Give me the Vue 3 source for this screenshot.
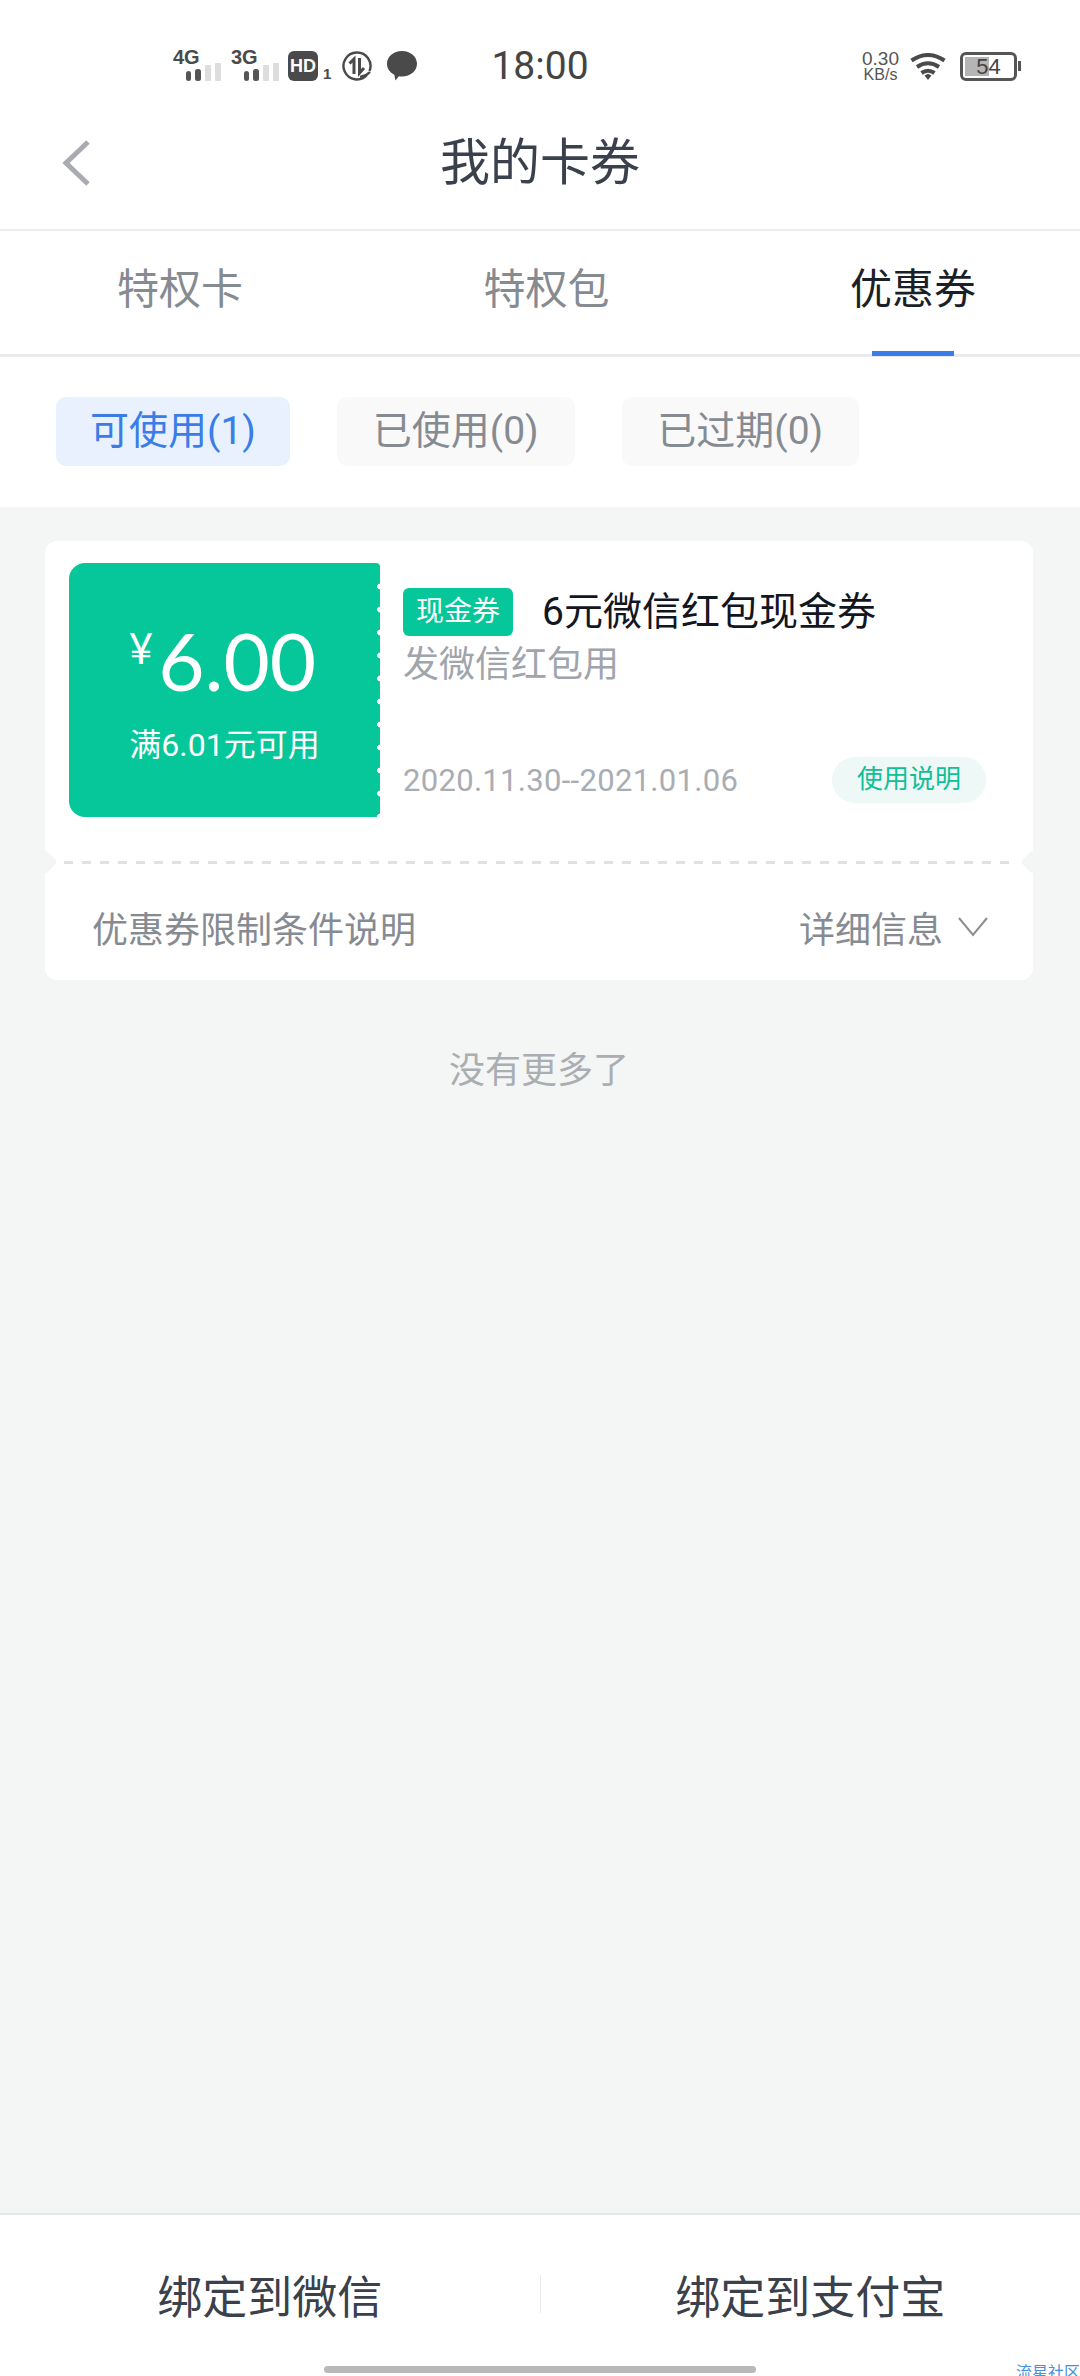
<template>
  <div class="page">
    <div class="status">
      <div class="status-left">
        <svg v-for="net in networks" :key="net" class="net" width="44" height="32" viewBox="0 0 44 32">
          <text x="0" y="14" class="net-text">{{ net }}</text>
          <rect x="13" y="21" width="5" height="10" rx="2.5" fill="#555" />
          <rect x="22" y="19" width="6" height="12" rx="2.5" fill="#555" />
          <rect x="32" y="15" width="6" height="16" rx="1" fill="#ddd" />
          <rect x="42" y="13" width="6" height="18" rx="1" fill="#ddd" />
        </svg>
        <div class="hd">HD</div>
        <span class="hd-num">1</span>
        <svg class="lte" width="30" height="30" viewBox="0 0 30 30" fill="none" stroke="#4a4a4a">
          <path d="M25 24A13.5 13.5 0 1 1 27.5 20" stroke-width="2.4" />
          <path d="M12 23V8L7.5 12.5" stroke-width="3" />
          <path d="M17.5 7V22L22 17" stroke-width="3" />
          <path d="M18 26Q24 25 28 21" stroke-width="2.4" />
        </svg>
        <svg class="bubble" width="30" height="30" viewBox="0 0 30 30">
          <path d="M15 0C23.500 0 30 5.600 30 12.800C30 20 23.500 25.500 15 25.500C13.800 25.500 12.800 25.400 11.800 25.200L8.500 29.500L7.300 23.800C2.900 21.600 0 17.500 0 12.800C0 5.600 6.500 0 15 0Z" fill="#4a4a4a" />
        </svg>
      </div>
      <div class="time">18:00</div>
      <div class="status-right">
        <div class="speed">
          <span class="speed-num">0.30</span>
          <span class="speed-unit">KB/s</span>
        </div>
        <svg class="wifi" width="36" height="27" viewBox="0 0 36 27" fill="none" stroke="#4a4a4a" stroke-width="4">
          <path d="M1.500 7.500Q18 -3.500 34.500 7.500" />
          <path d="M7 14Q18 6.500 29 14" />
          <path d="M11.500 20Q18 15.500 24.500 20" />
          <path d="M14.500 22.500L18 20.800L21.500 22.500L18 27Z" fill="#4a4a4a" stroke="none" />
        </svg>
        <div class="battery">
          <div class="battery-fill"></div>
          <span class="battery-num">54</span>
        </div>
        <div class="battery-tip"></div>
      </div>
    </div>

    <header class="nav">
      <svg class="back" width="28" height="46" viewBox="0 0 28 46" fill="none">
        <path d="M26 2L4 23L26 44" stroke="#a9abb0" stroke-width="5" />
      </svg>
      <h1>我的卡券</h1>
    </header>

    <div class="tabs">
      <div
        v-for="tab in tabs"
        :key="tab"
        class="tab"
        :class="{ active: tab === activeTab }"
      >{{ tab }}</div>
    </div>

    <div class="filters">
      <div
        v-for="(chip, i) in chips"
        :key="chip"
        class="chip"
        :class="{ on: i === 0 }"
      >{{ chip }}</div>
    </div>

    <main class="list">
      <section class="card">
        <div class="card-top">
          <div class="amount">
            <div class="price"><span class="yen">¥</span>6.00</div>
            <div class="limit">满6.01元可用</div>
          </div>
          <div class="info">
            <div class="title-row">
              <span class="badge">现金券</span>
              <span class="name">6元微信红包现金券</span>
            </div>
            <div class="desc">发微信红包用</div>
            <div class="date-row">
              <span class="date">2020.11.30--2021.01.06</span>
              <span class="howto">使用说明</span>
            </div>
          </div>
        </div>
        <div class="dash">
          <i class="notch left"></i>
          <i class="notch right"></i>
        </div>
        <div class="card-bottom">
          <span>优惠券限制条件说明</span>
          <span class="more">
            详细信息
            <svg width="30" height="22" viewBox="0 0 30 22" fill="none">
              <path d="M1 2L15 19L29 2" stroke="#8a8e94" stroke-width="2" />
            </svg>
          </span>
        </div>
      </section>
      <div class="no-more">没有更多了</div>
    </main>

    <footer class="footer">
      <div class="bind">绑定到微信</div>
      <div class="split"></div>
      <div class="bind">绑定到支付宝</div>
      <div class="home-bar"></div>
      <div class="mark">流星社区</div>
    </footer>
  </div>
</template>

<script setup>
const networks = ['4G', '3G']
const tabs = ['特权卡', '特权包', '优惠券']
const activeTab = '优惠券'
const chips = ['可使用(1)', '已使用(0)', '已过期(0)']
</script>

<style>
html,
body {
  margin: 0;
  background: #fff;
}
</style>

<style scoped>
.page {
  display: flex;
  flex-direction: column;
  height: 2376px;
  overflow: hidden;
  background: #fff;
  font-family: Roboto, "Noto Sans CJK SC", sans-serif;
}

.status {
  display: grid;
  grid-template-columns: 1fr auto 1fr;
  align-items: center;
  height: 100px;
  padding-top: 32px;
  box-sizing: border-box;
}

.status-left {
  display: flex;
  align-items: center;
  padding-left: 173px;
}

.net {
  overflow: visible;
  margin-right: 14px;
}

.net-text {
  font-size: 20px;
  font-weight: 700;
  fill: #4a4a4a;
  font-family: "Liberation Sans", sans-serif;
}

.hd {
  width: 30px;
  height: 30px;
  margin-left: -1px;
  border-radius: 6px;
  background: #4a4a4a;
  color: #fff;
  font: 700 18px/30px "Liberation Sans", sans-serif;
  text-align: center;
}

.hd-num {
  align-self: flex-end;
  width: 24px;
  padding-left: 5px;
  box-sizing: border-box;
  color: #4a4a4a;
  font: 700 15px/16px "Liberation Sans", sans-serif;
}

.bubble {
  margin-left: 15px;
}

.time {
  color: #444;
  font-size: 39px;
  line-height: 46px;
}

.status-right {
  display: flex;
  align-items: center;
  justify-content: flex-end;
  padding-right: 59px;
}

.speed {
  display: flex;
  flex-direction: column;
  align-items: center;
  margin-right: 11px;
  color: #555;
  font-family: "Liberation Sans", sans-serif;
}

.speed-num {
  font-size: 19px;
  line-height: 17px;
}

.speed-unit {
  font-size: 16px;
  line-height: 15px;
}

.wifi {
  margin-right: 14px;
}

.battery {
  position: relative;
  width: 57px;
  height: 29px;
  box-sizing: border-box;
  border: 3px solid #555;
  border-radius: 6px;
  text-align: center;
}

.battery-fill {
  position: absolute;
  top: 2px;
  bottom: 2px;
  left: 2px;
  width: 24px;
  background: #b5b5b5;
}

.battery-num {
  position: relative;
  display: block;
  color: #444;
  font: 22px/23px "Liberation Sans", sans-serif;
}

.battery-tip {
  width: 3px;
  height: 10px;
  margin-left: 1px;
  background: #555;
}

.nav {
  display: grid;
  grid-template-columns: 1fr auto 1fr;
  align-items: center;
  height: 131px;
  box-sizing: border-box;
  padding-bottom: 4px;
  border-bottom: 2px solid #ececee;
}

.back {
  margin-left: 62px;
}

.nav h1 {
  margin: 0;
  color: #3a404c;
  font-size: 50px;
  font-weight: 400;
  line-height: 64px;
}

.tabs {
  display: flex;
  justify-content: space-between;
  height: 126px;
  box-sizing: border-box;
  padding: 0 104px 0 117px;
  border-bottom: 3px solid #e9eaec;
}

.tab {
  position: relative;
  color: #868b92;
  font-size: 42px;
  line-height: 118px;
}

.tab.active {
  color: #1b1f28;
}

.tab.active::after {
  content: "";
  position: absolute;
  left: 22px;
  right: 22px;
  bottom: -2px;
  height: 5px;
  background: #3a7de8;
}

.filters {
  display: flex;
  gap: 47px;
  height: 150px;
  box-sizing: border-box;
  padding: 40px 0 0 56px;
}

.chip {
  width: 237.500px;
  height: 69px;
  border-radius: 10px;
  background: #f9f9fa;
  color: #868b92;
  font-size: 39px;
  line-height: 68px;
  text-align: center;
}

.chip.on {
  width: 234px;
  background: #e8f1fd;
  color: #3a7de8;
}

.list {
  flex: 1;
  padding: 34px 47px 0 45px;
  background: #f4f6f5;
}

.card {
  border-radius: 12px;
  background: #fff;
}

.card-top {
  display: flex;
  gap: 23px;
  height: 320px;
  box-sizing: border-box;
  padding: 22px 47px 0 24px;
}

.amount {
  position: relative;
  width: 311px;
  height: 254px;
  border-radius: 16px 4px 4px 16px;
  background: #06c799;
  color: #fff;
  text-align: center;
}

.amount::after {
  content: "";
  position: absolute;
  top: 12px;
  right: 0;
  bottom: 0;
  width: 4px;
  background-image: radial-gradient(circle at right center, #fff 2.6px, transparent 3.2px);
  background-size: 4px 23px;
}

.price {
  padding-top: 49px;
  padding-right: 4px;
  font-family: Lato, sans-serif;
  font-size: 80px;
  line-height: 96px;
}

.yen {
  position: relative;
  top: -27px;
  margin-right: 5px;
  font-size: 42px;
}

.limit {
  margin-top: 1px;
  font-size: 32px;
  line-height: 42px;
}

.info {
  display: flex;
  flex: 1;
  flex-direction: column;
  padding-top: 25px;
}

.title-row {
  display: flex;
  align-items: center;
  gap: 29px;
}

.badge {
  width: 110px;
  height: 48px;
  border-radius: 6px;
  background: #06c799;
  color: #fff;
  font-size: 28px;
  line-height: 47px;
  text-align: center;
}

.name {
  color: #12161f;
  font-size: 39px;
  line-height: 48px;
}

.desc {
  margin-top: 4px;
  color: #a0a4ab;
  font-size: 36px;
  line-height: 50px;
}

.date-row {
  display: flex;
  align-items: center;
  justify-content: space-between;
  margin-top: 67px;
}

.date {
  color: #a9adb3;
  font-size: 31px;
  letter-spacing: 0.300px;
}

.howto {
  width: 154px;
  height: 46px;
  border-radius: 23px;
  background: #eef8f6;
  color: #10bf96;
  font-size: 26px;
  line-height: 45px;
  text-align: center;
}

.dash {
  position: relative;
  height: 3px;
  background-image: repeating-linear-gradient(to right, #dfe1e4 0 9px, transparent 9px 18px);
  background-position: 19px 0;
  background-repeat: no-repeat;
  background-size: calc(100% - 34px) 100%;
}

.notch {
  position: absolute;
  top: -8px;
  width: 18px;
  height: 18px;
  border-radius: 4px;
  background: #f4f6f5;
  transform: rotate(45deg);
}

.notch.left {
  left: -9px;
}

.notch.right {
  right: -9px;
}

.card-bottom {
  display: flex;
  align-items: center;
  justify-content: space-between;
  height: 116px;
  box-sizing: border-box;
  padding: 10px 45px 0 47px;
  color: #868b92;
  font-size: 36px;
}

.more {
  display: flex;
  align-items: center;
  gap: 15px;
}

.no-more {
  margin-top: 66px;
  color: #aaaeb2;
  font-size: 36px;
  line-height: 50px;
  text-align: center;
}

.footer {
  position: relative;
  display: flex;
  align-items: center;
  justify-content: center;
  height: 163px;
  box-sizing: border-box;
  padding-bottom: 3px;
  border-top: 2px solid #e6e8ea;
  background: #fff;
}

.bind {
  flex: 1;
  color: #3a404c;
  font-size: 45px;
  text-align: center;
}

.split {
  width: 1px;
  height: 38px;
  background: #e8e8e8;
}

.home-bar {
  position: absolute;
  bottom: 3px;
  left: 324px;
  width: 432px;
  height: 7px;
  border-radius: 4px;
  background: #b9b9b9;
}

.mark {
  position: absolute;
  top: 147px;
  right: 0;
  color: #4a90d9;
  font-size: 16px;
  line-height: 22px;
}
</style>
